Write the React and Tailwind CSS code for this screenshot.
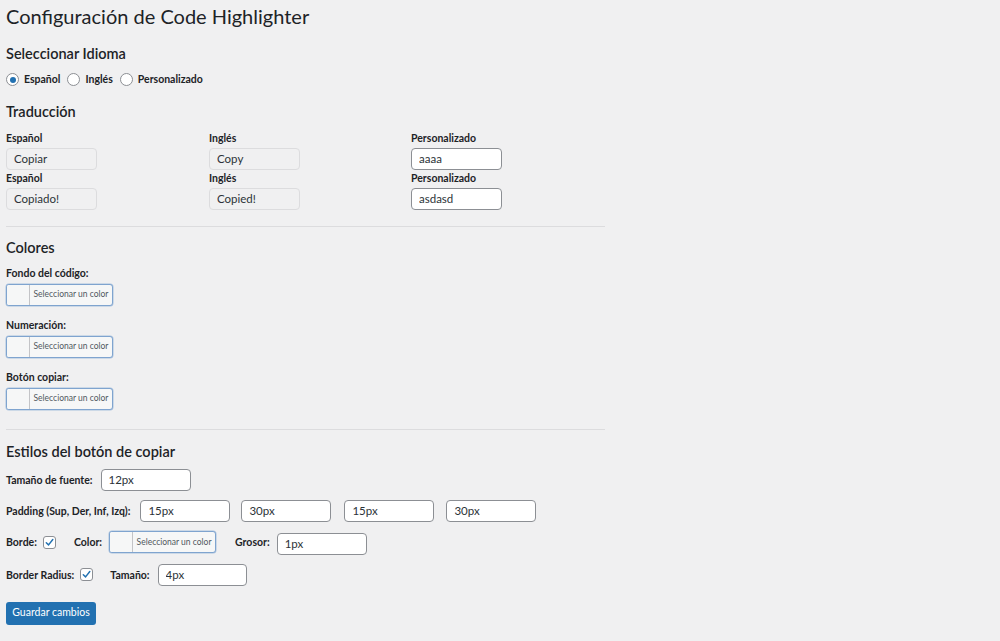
import { useState } from 'react';

const font = { fontFamily: 'Lato, "Noto Sans", sans-serif' };

const TextInput = ({ value, readOnly, className = "" }) => (
    <input
        type="text"
        defaultValue={value}
        readOnly={readOnly}
        className={`h-[22px] rounded-[4px] border px-[7px] text-[11.5px] text-[#2c3338] outline-none ${readOnly ? 'bg-[#f0f0f1] border-[#dcdcde]' : 'bg-white border-[#8c8f94]'} ${className}`}
    />
);

const ColorButton = () => (
    <button className="flex h-[22px] w-[107px] items-stretch overflow-hidden rounded-[3px] border border-[#7fa4cf] bg-[#f6f7f7] p-0 shadow-[0_0_0_0.5px_#a8c1de]">
        <span className="w-[23px] shrink-0 border-r border-[#c3c4c7] bg-[#f6f7f7]" />
        <span className="flex flex-1 items-center justify-center whitespace-nowrap text-[8.5px] text-[#50575e]">Seleccionar un color</span>
    </button>
);

const Checkbox = ({ checked }) => (
    <span className="inline-flex h-[13px] w-[13px] items-center justify-center rounded-[3px] border border-[#8c8f94] bg-white">
        {checked && (
            <svg viewBox="0 0 12 12" className="h-[11px] w-[11px]">
                <path d="M2.5 6.2 L5 8.6 L9.6 2.8" fill="none" stroke="#2271b1" strokeWidth="1.6" strokeLinecap="round" strokeLinejoin="round" />
            </svg>
        )}
    </span>
);

const Radio = ({ checked, onClick }) => (
    <span
        onClick={onClick}
        className="inline-flex h-[13px] w-[13px] items-center justify-center rounded-full border border-[#8c8f94] bg-white"
    >
        {checked && <span className="h-[6px] w-[6px] rounded-full bg-[#2271b1]" />}
    </span>
);

const SectionTitle = ({ children, className = "" }) => (
    <h2 className={`text-[14.5px] font-semibold leading-[18px] text-[#1d2327] ${className}`}>{children}</h2>
);

const Label = ({ children, className = "" }) => (
    <div className={`whitespace-nowrap text-[10.5px] font-bold leading-[14px] text-[#1d2327] ${className}`}>{children}</div>
);

const traducciones = [
    { es: 'Copiar', en: 'Copy', custom: 'aaaa' },
    { es: 'Copiado!', en: 'Copied!', custom: 'asdasd' },
];

export default function App() {
    const [idioma, setIdioma] = useState('es');

    return (
        <div className="min-h-screen bg-[#f0f0f1] px-[6px] pt-[4px] text-[#1d2327]" style={font}>
            <h1 className="text-[20px] font-normal leading-[24px] text-[#1d2327]">Configuración de Code Highlighter</h1>

            {/* Idioma */}
            <SectionTitle className="mt-[17px]">Seleccionar Idioma</SectionTitle>
            <div className="mt-[9px] flex items-center text-[10.5px] font-bold">
                {[['es', 'Español'], ['en', 'Inglés'], ['custom', 'Personalizado']].map(([key, label]) => (
                    <label key={key} className="mr-[7px] flex items-center gap-[5px]">
                        <Radio checked={idioma === key} onClick={() => setIdioma(key)} />
                        {label}
                    </label>
                ))}
            </div>

            {/* Traducción */}
            <SectionTitle className="mt-[15px]">Traducción</SectionTitle>
            <div className="mt-[10px] flex flex-col gap-[1px]">
                {traducciones.map((t, i) => (
                    <div key={i} className="grid grid-cols-[203px_202px_auto]">
                        <div>
                            <Label>Español</Label>
                            <TextInput value={t.es} readOnly className="mt-[3px] w-[91px]" />
                        </div>
                        <div>
                            <Label>Inglés</Label>
                            <TextInput value={t.en} readOnly className="mt-[3px] w-[91px]" />
                        </div>
                        <div>
                            <Label>Personalizado</Label>
                            <TextInput value={t.custom} className="mt-[3px] w-[91px]" />
                        </div>
                    </div>
                ))}
            </div>

            <hr className="mt-[16px] w-[599px] border-0 border-t border-[#dcdcde]" />

            {/* Colores */}
            <SectionTitle className="mt-[12px]">Colores</SectionTitle>
            {['Fondo del código:', 'Numeración:', 'Botón copiar:'].map((label, i) => (
                <div key={label} className={i === 0 ? 'mt-[9px]' : 'mt-[12px]'}>
                    <Label>{label}</Label>
                    <div className="mt-[4px]">
                        <ColorButton />
                    </div>
                </div>
            ))}

            <hr className="mt-[19px] w-[599px] border-0 border-t border-[#dcdcde]" />

            {/* Estilos del botón */}
            <SectionTitle className="mt-[13px]">Estilos del botón de copiar</SectionTitle>

            <div className="mt-[8px] flex items-center gap-[8px]">
                <Label>Tamaño de fuente:</Label>
                <TextInput value="12px" className="w-[90px]" />
            </div>

            <div className="mt-[9px] flex items-center">
                <Label className="mr-[10px]">Padding (Sup, Der, Inf, Izq):</Label>
                <TextInput value="15px" className="w-[90px]" />
                <TextInput value="30px" className="ml-[11px] w-[90px]" />
                <TextInput value="15px" className="ml-[13px] w-[90px]" />
                <TextInput value="30px" className="ml-[12px] w-[90px]" />
            </div>

            <div className="mt-[8px] flex items-center">
                <Label className="mr-[6px]">Borde:</Label>
                <Checkbox checked />
                <Label className="ml-[18px] mr-[7px]">Color:</Label>
                <ColorButton />
                <Label className="ml-[19px] mr-[7px]">Grosor:</Label>
                <TextInput value="1px" className="mt-[3px] w-[90px]" />
            </div>

            <div className="mt-[9px] flex items-center">
                <Label className="mr-[6px]">Border Radius:</Label>
                <Checkbox checked />
                <Label className="ml-[17px] mr-[8px]">Tamaño:</Label>
                <TextInput value="4px" className="w-[89px]" />
            </div>

            <button className="mt-[16px] h-[23px] w-[90px] rounded-[3px] bg-[#2271b1] text-[10.5px] text-white">
                Guardar cambios
            </button>
        </div>
    );
}
